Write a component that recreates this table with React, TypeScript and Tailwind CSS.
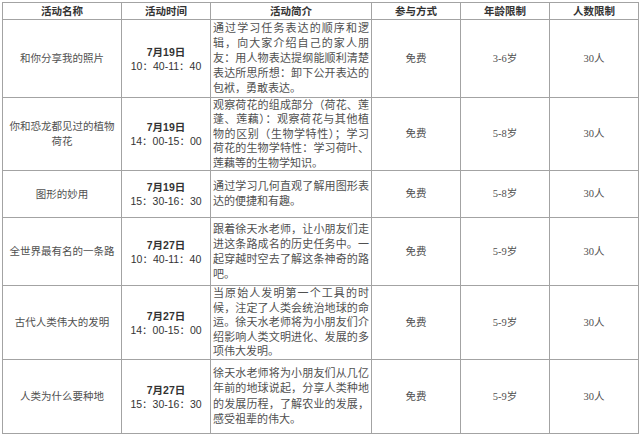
import React from "react";

type Row = {
  name: string[];
  date: string;
  time: string;
  desc: string[];
  fee: string;
  age: string;
  num: string;
  h: string;
  lh: string;
};

const rows: Row[] = [
  {
    name: ["和你分享我的照片"],
    date: "7月19日",
    time: "10：40-11：40",
    desc: [
      "通过学习任务表达的顺序和逻",
      "辑，向大家介绍自己的家人朋",
      "友：用人物表达提纲能顺利清楚",
      "表达所思所想：卸下公开表达的",
      "包袱，勇敢表达。",
    ],
    fee: "免费",
    age: "3-6岁",
    num: "30人",
    h: "h-[78px]",
    lh: "leading-[15px]",
  },
  {
    name: ["你和恐龙都见过的植物", "荷花"],
    date: "7月19日",
    time: "14：00-15：00",
    desc: [
      "观察荷花的组成部分（荷花、莲",
      "蓬、莲藕）：观察荷花与其他植",
      "物的区别（生物学特性）；学习",
      "荷花的生物学特性：学习荷叶、",
      "莲藕等的生物学知识。",
    ],
    fee: "免费",
    age: "5-8岁",
    num: "30人",
    h: "h-[73px]",
    lh: "leading-[14.4px]",
  },
  {
    name: ["图形的妙用"],
    date: "7月19日",
    time: "15：30-16：30",
    desc: ["通过学习几何直观了解用图形表", "达的便捷和有趣。"],
    fee: "免费",
    age: "5-8岁",
    num: "30人",
    h: "h-[47px]",
    lh: "leading-[15px]",
  },
  {
    name: ["全世界最有名的一条路"],
    date: "7月27日",
    time: "10：40-11：40",
    desc: [
      "跟着徐天水老师，让小朋友们走",
      "进这条路成名的历史任务中。一",
      "起穿越时空去了解这条神奇的路",
      "吧。",
    ],
    fee: "免费",
    age: "5-9岁",
    num: "30人",
    h: "h-[68px]",
    lh: "leading-[15px]",
  },
  {
    name: ["古代人类伟大的发明"],
    date: "7月27日",
    time: "14：00-15：00",
    desc: [
      "当原始人发明第一个工具的时",
      "候，注定了人类会统治地球的命",
      "运。徐天水老师将为小朋友们介",
      "绍影响人类文明进化、发展的多",
      "项伟大发明。",
    ],
    fee: "免费",
    age: "5-9岁",
    num: "30人",
    h: "h-[74px]",
    lh: "leading-[14.6px]",
  },
  {
    name: ["人类为什么要种地"],
    date: "7月27日",
    time: "15：30-16：30",
    desc: [
      "徐天水老师将为小朋友们从几亿",
      "年前的地球说起，分享人类种地",
      "的发展历程，了解农业的发展，",
      "感受祖辈的伟大。",
    ],
    fee: "免费",
    age: "5-9岁",
    num: "30人",
    h: "h-[74px]",
    lh: "leading-[15.5px]",
  },
];

const serif = "font-['Liberation_Serif','Noto_Sans_CJK_SC',serif]";
const sans = "font-['Liberation_Sans','Noto_Sans_CJK_SC',sans-serif]";
const cell = "border border-[#a3a3a3] align-middle";

export default function App() {
  return (
    <div className="w-[640px] h-[435px] bg-white pl-[2px] pt-[2px]">
      <table className="border-collapse table-fixed w-[636px] text-[#505050]">
        <colgroup>
          <col className="w-[119px]" />
          <col className="w-[89px]" />
          <col className="w-[161px]" />
          <col className="w-[89px]" />
          <col className="w-[89px]" />
          <col className="w-[89px]" />
        </colgroup>
        <thead>
          <tr className="h-[17px]">
            {["活动名称", "活动时间", "活动简介", "参与方式", "年龄限制", "人数限制"].map((t) => (
              <th
                key={t}
                className={`${cell} ${serif} text-center text-[10.5px] leading-[13px] font-bold text-[#333] p-0`}
              >
                {t}
              </th>
            ))}
          </tr>
        </thead>
        <tbody>
          {rows.map((r, i) => (
            <tr key={i} className={r.h}>
              <td className={`${cell} ${serif} text-center text-[10.5px] leading-[15px] p-0`}>
                {r.name.map((n) => (
                  <div key={n}>{n}</div>
                ))}
              </td>
              <td className={`${cell} ${sans} text-center text-[10.5px] leading-[14px] text-[#333] p-0`}>
                <div className="font-bold">{r.date}</div>
                <div>{r.time}</div>
              </td>
              <td className={`${cell} ${serif} ${r.lh} text-[11px] px-[2px] py-0`}>
                {r.desc.map((d, j) => (
                  <div
                    key={j}
                    className={
                      j < r.desc.length - 1
                        ? "text-justify [text-align-last:justify]"
                        : "text-left"
                    }
                  >
                    {d}
                  </div>
                ))}
              </td>
              <td className={`${cell} ${serif} text-center text-[10.5px] p-0`}>{r.fee}</td>
              <td className={`${cell} ${serif} text-center text-[10.5px] p-0`}>{r.age}</td>
              <td className={`${cell} ${serif} text-center text-[10.5px] p-0`}>{r.num}</td>
            </tr>
          ))}
        </tbody>
      </table>
    </div>
  );
}
